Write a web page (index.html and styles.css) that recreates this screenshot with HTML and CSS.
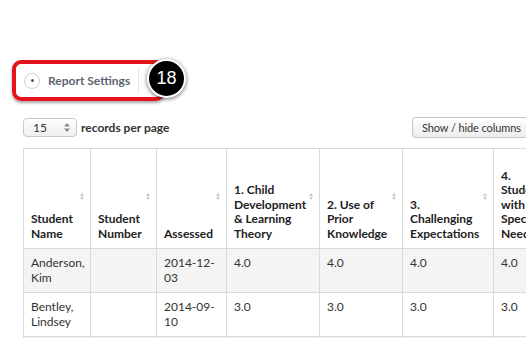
FILE: index.html
```html
<!DOCTYPE html>
<html lang="en">
<head>
<meta charset="UTF-8">
<meta name="viewport" content="width=device-width, initial-scale=1.0">
<title>Report</title>
<link rel="stylesheet" href="styles.css">
</head>
<body>
<div class="page">
  <div class="settings-bar">
    <div class="settings-box">
      <span class="radio"><span class="dot"></span></span>
      <span class="settings-label">Report Settings</span>
    </div>
    <div class="badge">18</div>
  </div>

  <div class="controls">
    <div class="length">
      <div class="select">
        <span>15</span>
        <svg width="6" height="9" viewBox="0 0 6 9"><path d="M3 0 L6 3.5 L0 3.5 Z M3 9 L6 5.5 L0 5.5 Z" fill="#888"/></svg>
      </div>
      <span class="length-label">records per page</span>
    </div>
    <button class="btn-cols">Show / hide columns</button>
  </div>

  <table class="report">
    <colgroup>
      <col style="width:67px">
      <col style="width:66px">
      <col style="width:70px">
      <col style="width:93px">
      <col style="width:83px">
      <col style="width:91px">
      <col style="width:75px">
    </colgroup>
    <tr>
      <th>Student Name<span class="sort"></span></th>
      <th>Student Number<span class="sort"></span></th>
      <th>Assessed<span class="sort"></span></th>
      <th>1. Child Development &amp; Learning Theory<span class="sort"></span></th>
      <th>2. Use of Prior Knowledge<span class="sort"></span></th>
      <th>3. Challenging Expectations<span class="sort"></span></th>
      <th>4. Students with Special Needs<span class="sort"></span></th>
    </tr>
    <tr class="odd">
      <td>Anderson, Kim</td>
      <td></td>
      <td>2014-12-03</td>
      <td>4.0</td>
      <td>4.0</td>
      <td>4.0</td>
      <td>4.0</td>
    </tr>
    <tr>
      <td>Bentley, Lindsey</td>
      <td></td>
      <td>2014-09-10</td>
      <td>3.0</td>
      <td>3.0</td>
      <td>3.0</td>
      <td>3.0</td>
    </tr>
    <tr class="odd empty">
      <td></td>
      <td></td>
      <td></td>
      <td></td>
      <td></td>
      <td></td>
      <td></td>
    </tr>
  </table>
</div>
</body>
</html>
```

FILE: styles.css
```css
body {
    margin: 0;
    background: #fff;
    font-family: Lato, "Open Sans", sans-serif;
    color: #333;
    overflow: hidden;
}

.page {
    width: 540px;
    padding-top: 60px;
}

.settings-bar {
    position: relative;
    margin-left: 12px;
    height: 41px;
}

.settings-box {
    display: flex;
    align-items: center;
    width: 153px;
    height: 41px;
    box-sizing: border-box;
    border: 4px solid #e3141c;
    border-radius: 9px;
    box-shadow: 0 2px 3px rgba(0,0,0,0.35);
    padding-left: 8px;
}

.radio {
    width: 16px;
    height: 16px;
    box-sizing: border-box;
    border: 1px solid #cfd3d6;
    border-radius: 50%;
    display: flex;
    align-items: center;
    justify-content: center;
}

.dot {
    width: 3px;
    height: 3px;
    border-radius: 50%;
    background: #4d5660;
}

.settings-label {
    margin-left: 8px;
    padding-right: 8px;
    border-right: 1px solid #e2e4e6;
    line-height: 26px;
    font-size: 12px;
    font-weight: bold;
    color: #5b6670;
}

.badge {
    position: absolute;
    left: 135px;
    top: -1px;
    width: 39px;
    height: 39px;
    box-sizing: border-box;
    border: 2px solid #fff;
    border-radius: 50%;
    background: #000;
    box-shadow: 0 1px 4px rgba(0,0,0,0.6);
    color: #fff;
    font-family: "Liberation Sans", Arial, sans-serif;
    font-size: 18px;
    line-height: 35px;
    text-align: center;
}

.controls {
    display: flex;
    justify-content: space-between;
    align-items: center;
    margin: 16px 0 0 23px;
}

.length {
    display: flex;
    align-items: center;
}

.select {
    display: flex;
    justify-content: space-between;
    align-items: center;
    width: 54px;
    height: 19px;
    box-sizing: border-box;
    padding: 0 6px 0 9px;
    border: 1px solid #c9c9c9;
    border-radius: 4px;
    background: linear-gradient(#fff, #eee);
    font-size: 12px;
}

.length-label {
    margin-left: 4px;
    font-size: 12px;
    font-weight: bold;
    color: #333;
}

.btn-cols {
    width: 128px;
    height: 21px;
    padding: 0 0 0 9px;
    text-align: left;
    border: 1px solid #c6c6c6;
    border-radius: 3px;
    background: linear-gradient(#fff, #ececec);
    font-family: Lato, "Open Sans", sans-serif;
    font-size: 11px;
    letter-spacing: -0.1px;
    color: #333;
}

.report {
    margin: 10px 0 0 23px;
    table-layout: fixed;
    width: 545px;
    border-collapse: collapse;
}

.report th,
.report td {
    border: 1px solid #dadada;
    text-align: left;
    font-size: 12px;
    line-height: 14.5px;
}

.report th {
    position: relative;
    height: 100px;
    box-sizing: border-box;
    vertical-align: bottom;
    padding: 7px 10px 7px 7px;
    font-weight: bold;
    color: #222;
}

.report td {
    vertical-align: top;
    padding: 6px 7px 7px;
    line-height: 15px;
}

.report tr.empty td {
    height: 30px;
}

.report tr.odd td {
    background: #f4f4f4;
}

.sort {
    position: absolute;
    right: 5px;
    top: 44px;
    width: 5px;
    height: 8px;
}

.sort::before,
.sort::after {
    content: "";
    position: absolute;
    left: 0;
    border-left: 2.5px solid transparent;
    border-right: 2.5px solid transparent;
}

.sort::before {
    top: 0;
    border-bottom: 3px solid #c8c8c8;
}

.sort::after {
    top: 4px;
    border-top: 3px solid #c8c8c8;
}
```
